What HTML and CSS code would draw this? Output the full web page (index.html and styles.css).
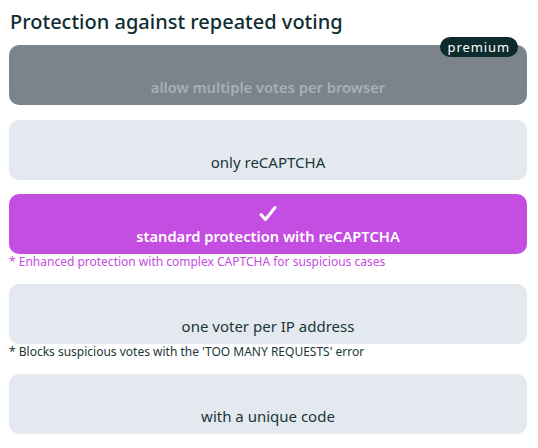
FILE: index.html
```html
<!DOCTYPE html>
<html lang="en">
<head>
<meta charset="utf-8">
<title>Protection against repeated voting</title>
<link rel="stylesheet" href="styles.css">
</head>
<body>
<div class="panel">
  <h2 class="title">Protection against repeated voting</h2>
  <div class="options">
    <div class="option option--disabled">
      <span class="badge">premium</span>
      <span class="check"></span>
      <span class="label">allow multiple votes per browser</span>
    </div>
    <div class="option">
      <span class="check"></span>
      <span class="label">only reCAPTCHA</span>
    </div>
    <div class="group">
      <div class="option option--selected">
        <span class="check">
          <svg width="18" height="17" viewBox="0 0 18 17"><path d="M2 9.5 L6.5 14.5 L16 2.5" fill="none" stroke="#fff" stroke-width="3" stroke-linecap="round" stroke-linejoin="round"/></svg>
        </span>
        <span class="label">standard protection with reCAPTCHA</span>
      </div>
      <p class="note note--accent">* Enhanced protection with complex CAPTCHA for suspicious cases</p>
    </div>
    <div class="group">
      <div class="option">
        <span class="check"></span>
        <span class="label">one voter per IP address</span>
      </div>
      <p class="note">* Blocks suspicious votes with the 'TOO MANY REQUESTS' error</p>
    </div>
    <div class="option">
      <span class="check"></span>
      <span class="label">with a unique code</span>
    </div>
  </div>
</div>
</body>
</html>
```
FILE: styles.css
```css
* { box-sizing: border-box; }
html, body { margin: 0; padding: 0; background: #fff; }
body {
  font-family: "Noto Sans", "Open Sans", sans-serif;
  color: #0f2d33;
}
.panel {
  width: 518px;
  margin-left: 9px;
  padding-top: 7px;
}
.title {
  margin: 0 0 0 1px;
  font-size: 20px;
  line-height: 30px;
  font-weight: 500;
  color: #0f2d33;
}
.options {
  margin-top: 8px;
  display: flex;
  flex-direction: column;
  gap: 14px;
}
.group { display: flex; flex-direction: column; }
.option {
  position: relative;
  height: 60px;
  border-radius: 10px;
  background: #e4e9f0;
  display: flex;
  flex-direction: column;
  align-items: center;
  justify-content: flex-end;
  padding-bottom: 7px;
}
.option--disabled { margin-bottom: 1px; }
.check {
  height: 25px;
  display: flex;
  align-items: center;
  justify-content: center;
}
.check svg { display: block; margin-top: 2px; }
.label {
  font-size: 15px;
  line-height: 22px;
  color: #1a3638;
}
.option--disabled { background: #7b848c; }
.option--disabled .label { color: #a7afb5; font-weight: 600; font-size: 14.7px; }
.option--selected { background: #c44de2; }
.option--selected .label { color: #fff; font-weight: 600; font-size: 14.7px; }
.badge {
  position: absolute;
  top: -8px;
  right: 9px;
  height: 20px;
  padding: 0 8px;
  border-radius: 10px;
  background: #0c2b2d;
  color: #fff;
  font-size: 13px;
  line-height: 20px;
  letter-spacing: 0.9px;
}
.note {
  margin: 0;
  font-size: 12px;
  line-height: 16px;
  color: #1a3638;
}
.note--accent { color: #c44de2; }
```
